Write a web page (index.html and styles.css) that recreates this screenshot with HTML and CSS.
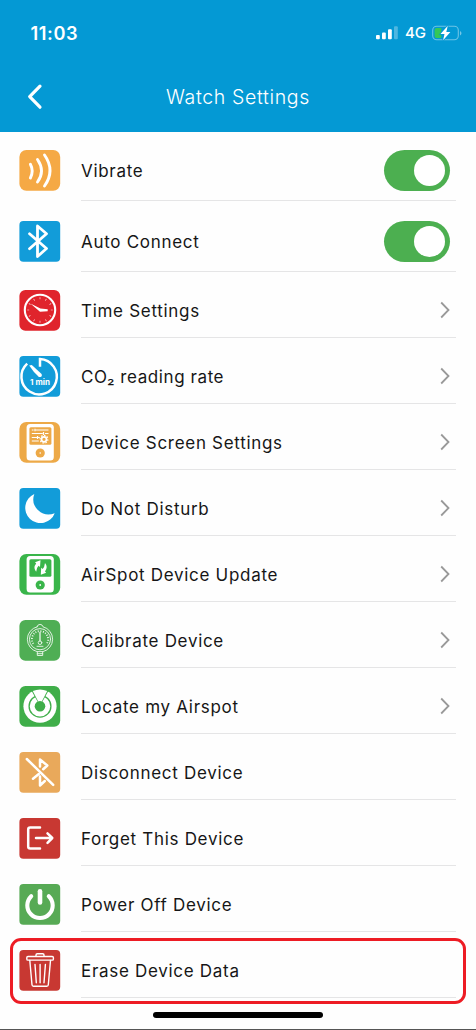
FILE: index.html
```html
<!DOCTYPE html>
<html lang="en">
<head>
<meta charset="utf-8">
<title>Watch Settings</title>
<link rel="stylesheet" href="styles.css">
</head>
<body>
<div class="screen">
<header class="header">
  <div class="status">
    <span class="time">11:03</span>
    <div class="status-right">
      <svg class="signal" width="22" height="14" viewBox="0 0 22 14" fill="#fff"><rect x="0" y="9" width="3.8" height="4.3" rx="1"/><rect x="6" y="6.6" width="3.8" height="6.7" rx="1"/><rect x="12" y="3.3" width="3.8" height="10" rx="1"/><rect x="18" y="0.2" width="3.8" height="13.1" rx="1" opacity=".3"/></svg>
      <span class="network">4G</span>
      <svg class="battery" width="30" height="16" viewBox="0 0 30 16"><rect x=".7" y="1.2" width="25.6" height="13.6" rx="4" fill="none" stroke="#fff" stroke-opacity=".42" stroke-width="1.1"/><path d="M28 6v4.4c2-.8 2-3.6 0-4.4z" fill="#fff" opacity=".45"/><path d="M4.5 3h4.8v10H4.5Q2.6 13 2.6 11V5Q2.6 3 4.5 3z" fill="#34c759"/><path d="M15.8.8 8.5 9h4l-1.4 6.2L18.4 7h-4.1z" fill="#fff" stroke="#0499d4" stroke-width="1.6" paint-order="stroke"/></svg>
    </div>
  </div>
  <div class="navbar">
    <svg class="back" width="16" height="28" viewBox="0 0 16 28"><path d="M13 3.2 2.7 13.7 13 24.2" fill="none" stroke="#fff" stroke-width="3.2" stroke-linecap="round" stroke-linejoin="round"/></svg>
    <h1 class="title">Watch Settings</h1>
  </div>
</header>

<main class="list">
  <div class="row row-first">
    <svg class="icon" viewBox="0 0 42 42"><rect class="orange" x=".4" width="40.8" height="40.8" rx="7"/><g class="line" stroke-width="2.9"><path d="M11.4 14.3Q15 21 11.4 28"/><path d="M18.5 9.5Q26.5 21 18.5 32"/><path d="M25.5 5Q36.5 20.5 25.5 36"/></g></svg>
    <div class="body"><span class="label">Vibrate</span><span class="toggle"><span class="knob"></span></span></div>
  </div>
  <div class="row row-second">
    <svg class="icon" viewBox="0 0 42 42"><rect class="blue" x=".4" width="40.8" height="40.8" rx="4"/><path class="line" stroke-width="2.8" d="M10.5 12.8 27.5 27.5 18.5 35.5V5L27.5 12.8 10.5 27.7"/></svg>
    <div class="body"><span class="label">Auto Connect</span><span class="toggle"><span class="knob"></span></span></div>
  </div>
  <div class="row">
    <svg class="icon" viewBox="0 0 42 42"><rect class="red" x=".4" width="40.8" height="40.8" rx="6"/><g class="line"><circle cx="21" cy="20" r="15.2" stroke-width="2.1"/><circle cx="21" cy="20" r="11.8" stroke-width="2" stroke-linecap="butt" pathLength="120" stroke-dasharray="1 9" stroke-dashoffset=".5"/></g><path d="m11.4 13.6 10 4.8 7.3.8v2l-7.7.5z" fill="#fff"/></svg>
    <div class="body"><span class="label">Time Settings</span><svg class="chevron" viewBox="0 0 12 18"><path d="m2.2 1.5 7.3 7.5-7.3 7.5"/></svg></div>
  </div>
  <div class="row">
    <svg class="icon" viewBox="0 0 42 42"><rect class="blue" x=".4" width="40.8" height="40.8" rx="4"/><path class="line sharp" stroke-width="2.5" d="M21 10.8V3A17.7 17.7 0 1 1 8.2 7.6"/><path d="m10.2 9.4 2.6-.5 9.8 9q1.2 3.2-2.7 3.2Q14.5 16 10.2 9.4z" fill="#fff"/><text x="21" y="29" class="minute">1 min</text></svg>
    <div class="body"><span class="label co2">CO₂ reading rate</span><svg class="chevron" viewBox="0 0 12 18"><path d="m2.2 1.5 7.3 7.5-7.3 7.5"/></svg></div>
  </div>
  <div class="row">
    <svg class="icon" viewBox="0 0 42 42"><rect class="orange2" x=".4" width="40.8" height="40.8" rx="7"/><rect x="7.6" y="2" width="27.2" height="36.4" rx="3.5" fill="#fff"/><rect class="orange2" x="10.4" y="5.3" width="22" height="17.5" rx="1.5"/><g stroke="#fff" stroke-width="1.2"><path d="M12.8 8h1.8M16.5 8h13M12.8 11.5h11M26 11.5h3.5M12.8 15.5h8M12.8 19h7"/><path d="M16 6.8v2.4M24.5 10v3M18.5 14v3"/></g><circle cx="25" cy="17.3" r="2.5" fill="none" stroke="#fff" stroke-width="1.7"/><circle cx="25" cy="17.3" r="3.9" fill="none" stroke="#fff" stroke-width="1.2" pathLength="16" stroke-dasharray="1 1"/><circle class="orange2" cx="21.2" cy="31" r="4.6"/><circle cx="21.2" cy="31" r=".8" fill="#fff"/></svg>
    <div class="body"><span class="label">Device Screen Settings</span><svg class="chevron" viewBox="0 0 12 18"><path d="m2.2 1.5 7.3 7.5-7.3 7.5"/></svg></div>
  </div>
  <div class="row">
    <svg class="icon" viewBox="0 0 42 42"><rect class="blue" x=".4" width="40.8" height="40.8" rx="4"/><path d="M15.3 6A15.2 15.2 0 1 0 35.7 25.2 15.3 15.3 0 0 1 15.3 6z" fill="#fff"/></svg>
    <div class="body"><span class="label">Do Not Disturb</span><svg class="chevron" viewBox="0 0 12 18"><path d="m2.2 1.5 7.3 7.5-7.3 7.5"/></svg></div>
  </div>
  <div class="row">
    <svg class="icon" viewBox="0 0 42 42"><rect class="green" x=".4" width="40.8" height="40.8" rx="7"/><rect x="7.6" y="2" width="27.2" height="36.4" rx="3.5" fill="#fff"/><rect class="green" x="10.4" y="5.3" width="22" height="17.5" rx="1.5"/><g fill="#fff"><path d="M21.5 6.2 16 8.3l1.2 1.2q-3.4 4 0 8.3.5-4.4 2.3-6l1.5 1.3z"/><path d="m21.8 20.8 5.4-2.1-1.2-1.3q3.4-4.3 0-8.3-.5 4.2-2.3 5.8l-1.5-1.2z"/></g><circle class="green" cx="21.2" cy="31" r="4.6"/><circle cx="21.2" cy="31" r=".9" fill="#fff"/></svg>
    <div class="body"><span class="label">AirSpot Device Update</span><svg class="chevron" viewBox="0 0 12 18"><path d="m2.2 1.5 7.3 7.5-7.3 7.5"/></svg></div>
  </div>
  <div class="row">
    <svg class="icon" viewBox="0 0 42 42"><rect class="green2" x=".4" width="40.8" height="40.8" rx="6"/><g class="line" stroke-width=".9" opacity=".9"><path d="M18 6.8q.5-2.4 3-2.4t3 2.4A12.8 12.8 0 0 1 24 31.6h-6A12.8 12.8 0 0 1 18 6.8z"/><circle cx="21" cy="19.2" r="10.6"/><path d="M18.3 32v3.5h5.4V32M18.3 33.7h5.4"/><path d="M14.3 23.8A8.1 8.1 0 1 1 27.7 23.8" stroke-width="1.8" stroke-dasharray="1 1.5" stroke-linecap="butt"/><path d="M21 12.5v8.5" stroke-width="1.3"/><circle cx="21" cy="22.7" r="1.8"/><path d="M18 26.3h6"/></g></svg>
    <div class="body"><span class="label">Calibrate Device</span><svg class="chevron" viewBox="0 0 12 18"><path d="m2.2 1.5 7.3 7.5-7.3 7.5"/></svg></div>
  </div>
  <div class="row">
    <svg class="icon" viewBox="0 0 42 42"><rect class="green3" x=".4" width="40.8" height="40.8" rx="6"/><circle cx="21" cy="20.2" r="16.6" fill="#fff"/><circle cx="21" cy="20.2" r="10.9" fill="none" stroke="#3fae49" stroke-width="1.3"/><path d="M21 20 11 2h20z" fill="#3fae49"/><path d="M21 19 13.8 5Q21 2 28.2 5z" fill="#fff"/><circle cx="21" cy="20.2" r="5.3" class="green3"/></svg>
    <div class="body"><span class="label">Locate my Airspot</span><svg class="chevron" viewBox="0 0 12 18"><path d="m2.2 1.5 7.3 7.5-7.3 7.5"/></svg></div>
  </div>
  <div class="row">
    <svg class="icon" viewBox="0 0 42 42"><rect class="tan" x=".4" width="40.8" height="40.8" rx="4"/><g class="line" stroke-width="2.5"><path d="M7.8 7 34.2 32.8"/><path d="M21 14.5V7.5L28.3 13.5 24.2 17.2M14 26.7 19.8 22M21 24.5V33.5L25.8 29"/></g></svg>
    <div class="body"><span class="label">Disconnect Device</span></div>
  </div>
  <div class="row">
    <svg class="icon" viewBox="0 0 42 42"><rect class="crimson" x=".4" width="40.8" height="40.8" rx="4"/><path class="line" stroke-width="2.5" stroke-linecap="butt" d="M21 9.5H11.2Q9.2 9.5 9.2 11.5V28.6Q9.2 30.6 11.2 30.6H21M17 20H33M28.5 15.3 33.3 20 28.5 24.8"/></svg>
    <div class="body"><span class="label">Forget This Device</span></div>
  </div>
  <div class="row">
    <svg class="icon" viewBox="0 0 42 42"><rect class="green4" x=".4" width="40.8" height="40.8" rx="4"/><path class="line" stroke-width="4.1" d="M12.2 12.2A12.7 12.7 0 1 0 29.8 12.2"/><path class="line" stroke-width="4.6" d="M21 7.3V18.5"/></svg>
    <div class="body"><span class="label">Power Off Device</span></div>
  </div>
  <div class="row row-selected">
    <svg class="icon" viewBox="0 0 42 42"><rect class="crimson" x=".4" width="40.8" height="40.8" rx="4"/><g class="line" stroke-width="1.4"><rect x="7.8" y="6.5" width="26.6" height="3.6" rx="1.2"/><path d="M17 6V5q0-1.3 1.3-1.3h5.4Q25 3.7 25 5v1"/><path d="M10.8 10.5 13 34.8q.1 1.5 1.5 1.5h13.3q1.4 0 1.5-1.5L31.5 10.5M16 14.5l1.3 18.2M21.1 14.5v18.2M26.4 14.5l-1.4 18.2"/></g></svg>
    <div class="body"><span class="label">Erase Device Data</span></div>
    <span class="highlight"></span>
  </div>
</main>
<div class="home"><span class="home-bar"></span></div>
</div>
</body>
</html>
```
FILE: styles.css
```css
* { box-sizing: border-box; }
body { margin: 0; background: #fff; font-family: Inter, "Liberation Sans", sans-serif; color: #161616; }
.screen { width: 476px; height: 1030px; display: flex; flex-direction: column; background: #fefefe; border-bottom: 1px solid #555; overflow: hidden; }
.header { height: 132px; flex: none; background: #0499d4; color: #fff; }
.status { height: 64px; padding: 1px 14px 0 30.5px; display: flex; justify-content: space-between; align-items: center; }
.time { font-size: 18.2px; font-weight: 600; letter-spacing: .6px; }
.status-right { display: flex; align-items: center; }
.network { font-size: 15px; font-weight: 450; margin: 0 6px 0 7px; }
.signal, .battery, .back { display: block; flex: none; }
.navbar { height: 66px; display: grid; grid-template-columns: 60px 1fr 60px; align-items: center; }
.back { margin-left: 27px; }
.title { margin: 0; text-align: center; font-size: 19.5px; font-weight: 350; letter-spacing: .65px; }
.list { flex: none; }
.row { position: relative; height: 66px; padding-left: 19px; display: flex; gap: 20px; }
.row-first { height: 69px; }
.row-second { height: 71px; }
.icon { display: block; width: 42px; height: 42px; flex: none; margin-top: 18px; }
.row-second .icon { margin-top: 20px; }
.body { flex: 1; margin-right: 20px; padding: 18px 5.6px 0 0; border-bottom: 1px solid #e5e5e6; display: flex; align-items: flex-start; justify-content: space-between; }
.row-second .body { padding-top: 20px; }
.label { font-size: 17px; line-height: 43px; letter-spacing: .7px; white-space: nowrap; }
.co2 { letter-spacing: .58px; }
.toggle { width: 66px; height: 41px; border-radius: 21px; background: #4caf50; display: flex; justify-content: flex-end; align-items: center; padding-right: 5px; }
.knob { width: 31px; height: 31px; border-radius: 50%; background: #fff; }
.chevron { width: 12px; height: 18px; margin: 11px -.4px 0 0; fill: none; stroke: #999; stroke-width: 1.8; }
.line { fill: none; stroke: #fff; stroke-linecap: round; stroke-linejoin: round; }
.sharp { stroke-linecap: butt; stroke-linejoin: miter; }
.minute { font-size: 8px; font-weight: 700; fill: #fff; text-anchor: middle; }
.orange { fill: #f5a945; }
.orange2 { fill: #eda947; }
.blue { fill: #129cd9; }
.red { fill: #e0242c; }
.green { fill: #39b54a; }
.green2 { fill: #4fae54; }
.green3 { fill: #3fae49; }
.green4 { fill: #57aa55; }
.tan { fill: #e9a95b; }
.crimson { fill: #c83832; }
.highlight { position: absolute; left: 10px; top: 6px; width: 456px; height: 66px; border: 3px solid #ed1c24; border-radius: 11px; }
.home { flex: 1; display: flex; justify-content: center; align-items: flex-start; padding-top: 14px; }
.home-bar { width: 170px; height: 6px; border-radius: 3px; background: #000; }
```
